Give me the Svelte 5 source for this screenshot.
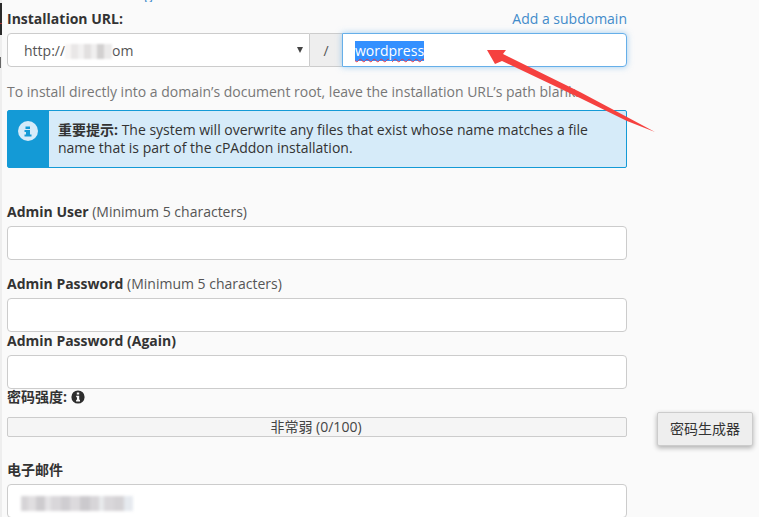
<script>
  const mosaic = [
    ['#f8f6f5', 6], ['#e9e7e7', 7], ['#f2f1f1', 6], ['#e2e0e0', 7], ['#f0efef', 6], ['#d2d0d0', 7], ['#ebeaea', 8]
  ];
  const emailMosaic = [
    ['#d6d4d7', 7], ['#e0dee0', 8], ['#cdcbce', 9], ['#e4e3e5', 6], ['#d9d7da', 10], ['#cfcdd1', 9], ['#dcdadd', 10],
    ['#cbc9cd', 10], ['#d7d5d8', 9], ['#e8eaec', 5], ['#d9d7da', 10], ['#d4d2d5', 10], ['#e6eaef', 9]
  ];
</script>

<div class="page">
  <div class="edge">
    <span class="edge-bar"></span>
    <span class="edge-dot"></span>
  </div>

  <main class="form">
    <div class="cut-link">Setting</div>

    <div class="label-row">
      <span class="label">Installation URL:</span>
      <span class="link">Add a subdomain</span>
    </div>

    <div class="url-group">
      <div class="domain">
        <span>http://</span>
        <span class="mosaic soft">
          {#each mosaic as [color, width]}
            <i style="background: {color}; width: {width}px"></i>
          {/each}
        </span>
        <span>om</span>
        <span class="caret"></span>
      </div>
      <div class="slash">/</div>
      <div class="path">
        <span class="selected">wordpress</span>
      </div>
    </div>

    <p class="help">To install directly into a domain’s document root, leave the installation URL’s path blank.</p>

    <div class="alert">
      <div class="alert-icon">
        <svg width="20" height="20" viewBox="0 0 20 20">
          <circle cx="10" cy="10" r="10" fill="#d6ebf9" />
          <path d="M7.500 5.500h4.500v2.500H7.500zM6.500 9h5.500v4.500h1.500v2H6.500v-2H8v-2.500H6.500z" fill="#149ad6" />
        </svg>
      </div>
      <div class="alert-body"><b>重要提示:</b> The system will overwrite any files that exist whose name matches a file name that is part of the cPAddon installation.</div>
    </div>

    <div class="field first">
      <div class="label">Admin User <span class="hint">(Minimum 5 characters)</span></div>
      <div class="input"></div>
    </div>

    <div class="field">
      <div class="label">Admin Password <span class="hint">(Minimum 5 characters)</span></div>
      <div class="input"></div>
    </div>

    <div class="field tight">
      <div class="label">Admin Password (Again)</div>
      <div class="input"></div>
    </div>

    <div class="strength-label label">
      密码强度:
      <svg width="14" height="14" viewBox="0 0 14 14">
        <circle cx="7" cy="7" r="6.600" fill="#2d2d2d" />
        <path d="M5.800 2.600h2.400v2H5.800zM5.200 5.700h3v4.100h.8v1.600H5.100V9.800h.9V7.300h-.8z" fill="#fafafa" />
      </svg>
    </div>

    <div class="strength-row">
      <div class="meter">非常弱 (0/100)</div>
      <button class="gen" type="button">密码生成器</button>
    </div>

    <div class="field email">
      <div class="label">电子邮件</div>
      <div class="input mail">
        <span class="mosaic blur">
          {#each emailMosaic as [color, width]}
            <i style="background: {color}; width: {width}px"></i>
          {/each}
        </span>
      </div>
    </div>
  </main>

  <!-- red annotation arrow drawn over the form -->
  <svg class="arrow" width="759" height="517" viewBox="0 0 759 517">
    <path
      d="M487 50 L506 50 L503 54 L580 92 L627 117 L655 132 L627 121 L580 98 L502 61 L495 64 Z"
      fill="#f5413f"
    />
  </svg>
</div>

<style>
  :global(body) {
    margin: 0;
    background: #fafafa;
  }

  .page {
    position: relative;
    width: 759px;
    height: 517px;
    overflow: hidden;
    display: flex;
    font-family: "Open Sans", "Noto Sans CJK SC", sans-serif;
    font-size: 14px;
    line-height: 20px;
    color: #333;
  }

  .edge {
    width: 2px;
    flex: none;
    background: #eeeeee;
  }
  .edge-bar {
    display: block;
    height: 32px;
    margin-top: 3px;
    background: linear-gradient(#2a2a2a 0 20px, #a33 20px 21px, #2a2a2a 21px);
  }
  .edge-dot {
    display: block;
    width: 1px;
    height: 11px;
    margin-top: 22px;
    background: #666;
  }

  .form {
    width: 620px;
    margin-left: 5px;
    flex: none;
  }

  /* previous row scrolled off: only the descender still shows */
  .cut-link {
    height: 18px;
    margin-top: -16px;
    padding-left: 100px;
    overflow: hidden;
    color: #428bca;
  }

  .label-row {
    display: flex;
    justify-content: space-between;
    margin-top: 7px;
  }

  .label {
    font-weight: 700;
    color: #333;
  }
  .hint {
    font-weight: 400;
    color: #555;
  }
  .link {
    color: #428bca;
  }

  .url-group {
    display: flex;
    height: 34px;
    margin-top: 4px;
  }
  .domain {
    display: flex;
    align-items: center;
    width: 303px;
    box-sizing: border-box;
    padding: 2px 0 0 16px;
    background: #fff;
    border: 1px solid #ccc;
    border-radius: 4px 0 0 4px;
    color: #555;
    position: relative;
  }
  .caret {
    position: absolute;
    right: 6px;
    top: 13px;
    border-left: 3.500px solid transparent;
    border-right: 3.500px solid transparent;
    border-top: 6px solid #444;
  }
  .slash {
    width: 32px;
    box-sizing: border-box;
    display: flex;
    align-items: center;
    justify-content: center;
    padding-top: 2px;
    background: #eee;
    border-top: 1px solid #ccc;
    border-bottom: 1px solid #ccc;
    color: #555;
  }
  .path {
    flex: 1;
    display: flex;
    align-items: center;
    padding: 2px 0 0 12px;
    background: #fff;
    border: 1px solid #66afe9;
    border-radius: 0 4px 4px 0;
    box-shadow: 0 0 6px rgba(102, 175, 233, 0.6);
  }
  .selected {
    background: #3390ff;
    color: #fff;
    text-decoration: underline wavy #e0364a 1px;
    text-underline-offset: 2px;
  }

  .mosaic {
    display: inline-flex;
    height: 15px;
  }
  .mosaic i {
    display: block;
    height: 100%;
  }
  .soft {
    filter: blur(1.2px);
  }
  .blur {
    filter: blur(1.5px);
  }

  .help {
    margin: 15px 0 0;
    color: #777;
  }

  .alert {
    display: flex;
    height: 58px;
    box-sizing: border-box;
    margin-top: 8px;
    background: #d6ebf9;
    border: 1px solid #149ad6;
    border-radius: 2px;
  }
  .alert-icon {
    width: 41px;
    flex: none;
    box-sizing: border-box;
    padding: 10px 0 0 10px;
    background: #149ad6;
  }
  .alert-icon svg {
    display: block;
  }
  .alert-body {
    padding: 10px 20px 0 9px;
    line-height: 18px;
    color: #333;
  }
  .alert-body b {
    font-weight: 700;
  }

  .field {
    margin-top: 14px;
  }
  .field.first {
    margin-top: 34px;
  }
  .field.tight {
    margin-top: -1px;
  }
  .field .input {
    margin-top: 4px;
  }

  .input {
    height: 34px;
    box-sizing: border-box;
    background: #fff;
    border: 1px solid #ccc;
    border-radius: 4px;
  }
  .mail {
    display: flex;
    align-items: center;
    padding: 4px 0 0 13px;
  }

  .strength-label {
    display: flex;
    align-items: center;
    gap: 4px;
    height: 20px;
    margin-top: -2px;
  }

  .strength-row {
    display: flex;
    height: 20px;
    margin-top: 10px;
  }
  .meter {
    width: 620px;
    flex: none;
    box-sizing: border-box;
    padding-right: 2px;
    border: 1px solid #ccc;
    border-radius: 2px;
    background: #f5f5f5;
    text-align: center;
    line-height: 18px;
    color: #444;
  }
  .gen {
    flex: none;
    width: 96px;
    height: 34px;
    margin: -5px 0 0 30px;
    padding: 0;
    background: #eee;
    border: 1px solid #ccc;
    border-radius: 2px;
    box-shadow: 0 2px 5px rgba(0, 0, 0, 0.3);
    font: inherit;
    color: #333;
  }

  .field.email {
    margin-top: 23px;
  }

  .arrow {
    position: absolute;
    left: 0;
    top: 0;
    pointer-events: none;
  }
</style>
